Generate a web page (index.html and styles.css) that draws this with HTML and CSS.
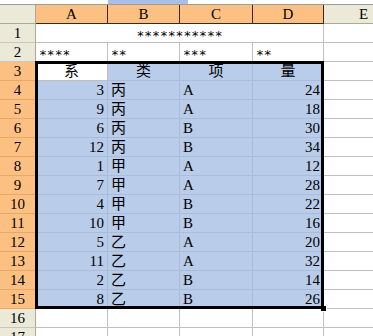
FILE: index.html
```html
<!DOCTYPE html>
<html>
<head>
<meta charset="utf-8">
<link rel="stylesheet" href="styles.css">
</head>
<body>
<div class="sheet">
  <div class="strip">
    <div class="namebox"><span class="clip">A3</span></div>
    <div class="fx"></div>
    <div class="formula"><span class="clip">系</span></div>
  </div>

  <div class="corner"></div>
  <div class="ch on">A</div>
  <div class="ch on">B</div>
  <div class="ch on">C</div>
  <div class="ch on">D</div>
  <div class="ch">E</div>

  <div class="rh">1</div>
  <div class="c merged stars">***********</div>
  <div class="c"></div>

  <div class="rh">2</div>
  <div class="c stars">****</div>
  <div class="c stars">**</div>
  <div class="c stars">***</div>
  <div class="c stars">**</div>
  <div class="c"></div>

  <div class="rh on">3</div>
  <div class="c active ctr">系</div>
  <div class="c sel ctr">类</div>
  <div class="c sel ctr">项</div>
  <div class="c sel ctr">量</div>
  <div class="c"></div>

  <div class="rh on">4</div><div class="c sel r">3</div><div class="c sel">丙</div><div class="c sel">A</div><div class="c sel r">24</div><div class="c"></div>
  <div class="rh on">5</div><div class="c sel r">9</div><div class="c sel">丙</div><div class="c sel">A</div><div class="c sel r">18</div><div class="c"></div>
  <div class="rh on">6</div><div class="c sel r">6</div><div class="c sel">丙</div><div class="c sel">B</div><div class="c sel r">30</div><div class="c"></div>
  <div class="rh on">7</div><div class="c sel r">12</div><div class="c sel">丙</div><div class="c sel">B</div><div class="c sel r">34</div><div class="c"></div>
  <div class="rh on">8</div><div class="c sel r">1</div><div class="c sel">甲</div><div class="c sel">A</div><div class="c sel r">12</div><div class="c"></div>
  <div class="rh on">9</div><div class="c sel r">7</div><div class="c sel">甲</div><div class="c sel">A</div><div class="c sel r">28</div><div class="c"></div>
  <div class="rh on">10</div><div class="c sel r">4</div><div class="c sel">甲</div><div class="c sel">B</div><div class="c sel r">22</div><div class="c"></div>
  <div class="rh on">11</div><div class="c sel r">10</div><div class="c sel">甲</div><div class="c sel">B</div><div class="c sel r">16</div><div class="c"></div>
  <div class="rh on">12</div><div class="c sel r">5</div><div class="c sel">乙</div><div class="c sel">A</div><div class="c sel r">20</div><div class="c"></div>
  <div class="rh on">13</div><div class="c sel r">11</div><div class="c sel">乙</div><div class="c sel">A</div><div class="c sel r">32</div><div class="c"></div>
  <div class="rh on">14</div><div class="c sel r">2</div><div class="c sel">乙</div><div class="c sel">B</div><div class="c sel r">14</div><div class="c"></div>
  <div class="rh on">15</div><div class="c sel r">8</div><div class="c sel">乙</div><div class="c sel">B</div><div class="c sel r">26</div><div class="c"></div>

  <div class="rh">16</div><div class="c"></div><div class="c"></div><div class="c"></div><div class="c"></div><div class="c"></div>
  <div class="rh">17</div><div class="c"></div><div class="c"></div><div class="c"></div><div class="c"></div><div class="c"></div>

  <div class="selbox"><div class="handle"></div></div>
</div>
</body>
</html>
```

FILE: styles.css
```css
html, body {
  margin: 0;
  padding: 0;
  background: #ffffff;
  overflow: hidden;
}

.sheet {
  position: relative;
  display: grid;
  grid-template-columns: 36px 72px 72px 73px 71px 80px;
  grid-template-rows: 5px 19px repeat(17, 19px);
  width: 404px;
  font-family: "Liberation Serif", "Noto Sans CJK SC", serif;
  font-size: 15px;
  color: #000;
}

.strip {
  grid-column: 1 / -1;
  display: flex;
  border-bottom: 1px solid #9d9d9d;
  background: #ffffff;
  overflow: hidden;
  box-sizing: border-box;
}
.namebox {
  width: 108px;
  overflow: hidden;
}
.fx {
  width: 80px;
  background: #a9bfe6;
}
.formula {
  flex: 1;
  overflow: hidden;
}
.clip {
  display: block;
  line-height: 16px;
  margin-top: -13px;
  font-size: 12px;
}
.namebox .clip { padding-left: 46px; }
.formula .clip { padding-left: 10px; }

.corner, .ch, .rh, .c {
  box-sizing: border-box;
  border-right: 1px solid #c0c0c0;
  border-bottom: 1px solid #c0c0c0;
  line-height: 19px;
  white-space: nowrap;
  overflow: hidden;
}

.corner {
  background: #ebe9d8;
  border-right-color: #aca899;
  border-bottom-color: #aca899;
}

.ch {
  background: #ebe9d8;
  text-align: center;
  border-right-color: #aca899;
  border-bottom-color: #aca899;
}
.ch.on {
  background: #fdc083;
  border-right-color: #3b2a1a;
  border-bottom-color: #3b2a1a;
}

.rh {
  background: #ebe9d8;
  text-align: center;
  border-right-color: #aca899;
  border-bottom-color: #cbc7b8;
}
.rh.on {
  background: #fdc083;
  border-right-color: #2a1e12;
  border-bottom-color: #e8a868;
}

.c {
  padding: 0 3px;
  background: #ffffff;
}
.c.merged {
  grid-column: 2 / 6;
  text-align: center;
}
.c.stars {
  line-height: 24px;
  font-family: "DejaVu Sans Mono", monospace;
  font-size: 13px;
}
.c.sel {
  background: #b9cce9;
  border-right-color: #a9bcd9;
  border-bottom-color: #a9bcd9;
}
.c.active {
  background: #ffffff;
}
.c.r { text-align: right; }
.c.ctr { text-align: center; }

.selbox {
  position: absolute;
  grid-column: 2 / 6;
  grid-row: 5 / 18;
  top: -1px;
  left: -1px;
  right: 0;
  bottom: 0;
  border: 3px solid #000;
  pointer-events: none;
}
.handle {
  position: absolute;
  right: -6px;
  bottom: -6px;
  width: 5px;
  height: 5px;
  background: #000;
  border: 1px solid #fff;
  border-left: none;
  border-top: none;
}
```
